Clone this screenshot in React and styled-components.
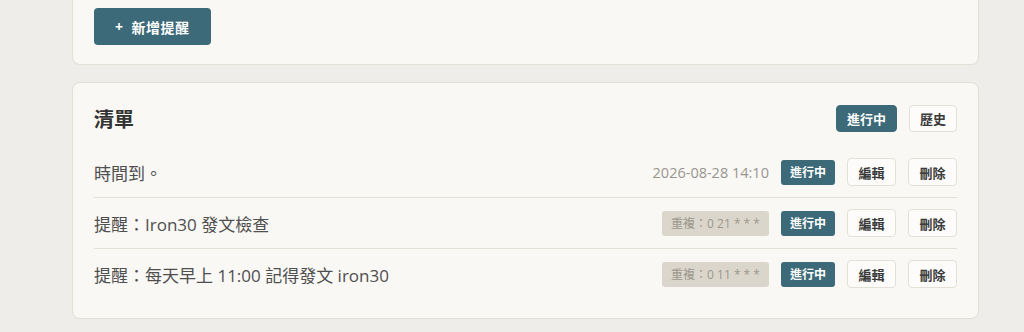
import React from 'react';
import styled, { createGlobalStyle } from 'styled-components';

const GlobalStyle = createGlobalStyle`
  body {
    margin: 0;
    background: #efede9;
    font-family: "Open Sans", "Noto Sans CJK TC", sans-serif;
    color: #444;
  }
`;

const Page = styled.main`
  width: 907px;
  margin-left: 72px;
  display: flex;
  flex-direction: column;
  gap: 17px;
`;

const Card = styled.section`
  background: #f9f8f5;
  border: 1px solid #e3dfd7;
  border-radius: 8px;
  padding: 21px 21px 19px;
  ${p => p.$tail && `
    border-top: none;
    border-top-left-radius: 0;
    border-top-right-radius: 0;
    padding-top: 8px;
  `}
`;

const PrimaryButton = styled.button`
  height: 37px;
  padding: 0 21px;
  border: none;
  border-radius: 4px;
  background: #3c6a78;
  color: #fff;
  font-family: inherit;
  font-size: 14px;
  font-weight: 700;
  letter-spacing: 0.5px;
  display: flex;
  align-items: center;
  gap: 8px;
`;

const Header = styled.div`
  display: flex;
  align-items: center;
  justify-content: space-between;
  height: 28px;
  margin-bottom: 15px;
`;

const Title = styled.h2`
  margin: 0;
  font-size: 20px;
  font-weight: 700;
  color: #333;
`;

const Group = styled.div`
  display: flex;
  align-items: center;
  gap: 12px;
`;

const Btn = styled.button`
  height: ${p => (p.$tab ? 27 : 28)}px;
  padding: 0 ${p => (p.$tab ? 10 : 10.5)}px;
  border-radius: 4px;
  font-family: inherit;
  font-size: 13px;
  font-weight: 700;
  border: 1px solid ${p => (p.$active ? '#3c6a78' : '#e4e0d8')};
  background: ${p => (p.$active ? '#3c6a78' : '#fdfcfa')};
  color: ${p => (p.$active ? '#fff' : '#3a3a3a')};
`;

const List = styled.ul`
  list-style: none;
  margin: 0;
  padding: 0;
`;

const Row = styled.li`
  display: flex;
  align-items: center;
  justify-content: space-between;
  padding: 11px 0;
  & + & {
    border-top: 1px solid #e3dfd7;
  }
`;

const Text = styled.span`
  font-size: 17px;
  color: #4f4f4f;
`;

const Date = styled.span`
  font-size: 14.5px;
  color: #9a958f;
`;

const Repeat = styled.span`
  height: 25px;
  padding: 0 9px;
  border-radius: 3px;
  background: #dbd6cb;
  color: #9b968d;
  font-size: 12px;
  display: flex;
  align-items: center;
`;

const Badge = styled.span`
  height: 25px;
  padding: 0 9px;
  border-radius: 3px;
  background: #3c6a78;
  color: #fff;
  font-size: 12px;
  font-weight: 700;
  display: flex;
  align-items: center;
`;

const items = [
  { text: '時間到。', date: '2026-08-28 14:10' },
  { text: '提醒：Iron30 發文檢查', repeat: '重複：0 21 * * *' },
  { text: '提醒：每天早上 11:00 記得發文 iron30', repeat: '重複：0 11 * * *' },
];

export default function App() {
  return (
    <>
      <GlobalStyle />
      <Page>
        <Card $tail>
          <PrimaryButton>
            <span>+</span>
            <span>新增提醒</span>
          </PrimaryButton>
        </Card>
        <Card>
          <Header>
            <Title>清單</Title>
            <Group>
              <Btn $tab $active>進行中</Btn>
              <Btn $tab>歷史</Btn>
            </Group>
          </Header>
          <List>
            {items.map(it => (
              <Row key={it.text}>
                <Text>{it.text}</Text>
                <Group>
                  {it.date && <Date>{it.date}</Date>}
                  {it.repeat && <Repeat>{it.repeat}</Repeat>}
                  <Badge>進行中</Badge>
                  <Btn>編輯</Btn>
                  <Btn>刪除</Btn>
                </Group>
              </Row>
            ))}
          </List>
        </Card>
      </Page>
    </>
  );
}
